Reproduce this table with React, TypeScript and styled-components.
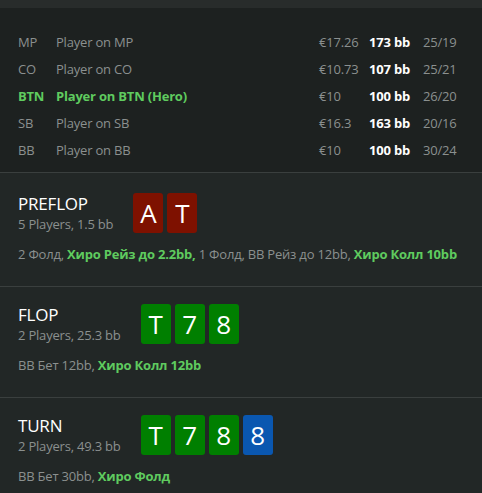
import React from "react";
import styled, {createGlobalStyle} from "styled-components";

// Hand history view

const Global = createGlobalStyle`
    html, body {
        margin: 0;
        padding: 0;
        background: #222726;
    }
    body {
        font-family: "Open Sans", "Noto Sans", sans-serif;
        font-size: 13px;
        color: #8b908f;
    }
`

const Page = styled.div`
    width: 482px;
    min-height: 485px;
    border-top: 8px solid #282c2b;
    background: #222726;
`

const Players = styled.div`
    display: grid;
    grid-template-columns: 38px 263px 50px 54px auto;
    padding: 21px 18px 8px 18px;
    background: #1d2120;
    border-bottom: 1px solid #3a3f3e;
`

const Cell = styled.div<{ $hero?: boolean, $strong?: boolean }>`
    height: 27px;
    line-height: 27px;
    white-space: nowrap;
    letter-spacing: -0.2px;
    color: ${p => p.$hero ? '#5fcb5f' : p.$strong ? '#ffffff' : '#8b908f'};
    font-weight: ${p => (p.$hero || p.$strong) ? 700 : 400};
`

const Street = styled.section`
    background: #222726;
    padding: 16px 18px 23px 18px;
    border-bottom: 1px solid #3a3f3e;
    &:first-of-type {
        padding-top: 19px;
    }
    &:last-child {
        border-bottom: none;
    }
`

const StreetHead = styled.div`
    display: flex;
    align-items: center;
    gap: 20px;
`

const Titles = styled.div`
    display: flex;
    flex-direction: column;
`

const StreetName = styled.div`
    color: #ffffff;
    font-size: 17px;
    line-height: 23px;
    letter-spacing: -0.2px;
`

const StreetInfo = styled.div`
    font-size: 13px;
    line-height: 18px;
    letter-spacing: -0.2px;
`

const Cards = styled.div`
    display: flex;
    gap: 4px;
`

const Card = styled.div<{ $color: string }>`
    width: 30px;
    height: 40px;
    border-radius: 3px;
    background: ${p => p.$color};
    color: #ffffff;
    font-size: 26px;
    line-height: 40px;
    text-align: center;
`

const Actions = styled.div`
    margin-top: 12px;
    line-height: 18px;
    letter-spacing: -0.2px;
    white-space: nowrap;
`

const Hero = styled.span`
    color: #5fcb5f;
    font-weight: 700;
`

const RED = '#7e1100'
const GREEN = '#007f00'
const BLUE = '#0a57b0'

const players = [
    {pos: 'MP', name: 'Player on MP', money: '€17.26', bb: '173 bb', ratio: '25/19'},
    {pos: 'CO', name: 'Player on CO', money: '€10.73', bb: '107 bb', ratio: '25/21'},
    {pos: 'BTN', name: 'Player on BTN (Hero)', money: '€10', bb: '100 bb', ratio: '26/20', hero: true},
    {pos: 'SB', name: 'Player on SB', money: '€16.3', bb: '163 bb', ratio: '20/16'},
    {pos: 'BB', name: 'Player on BB', money: '€10', bb: '100 bb', ratio: '30/24'},
]

const streets: {
    name: string, info: string,
    cards: [string, string][],
    actions: [string, boolean][]
}[] = [
    {
        name: 'PREFLOP', info: '5 Players, 1.5 bb',
        cards: [['A', RED], ['T', RED]],
        actions: [
            ['2 Фолд, ', false], ['Хиро Рейз до 2.2bb,', true],
            [' 1 Фолд, BB Рейз до 12bb, ', false], ['Хиро Колл 10bb', true],
        ],
    },
    {
        name: 'FLOP', info: '2 Players, 25.3 bb',
        cards: [['T', GREEN], ['7', GREEN], ['8', GREEN]],
        actions: [['BB Бет 12bb, ', false], ['Хиро Колл 12bb', true]],
    },
    {
        name: 'TURN', info: '2 Players, 49.3 bb',
        cards: [['T', GREEN], ['7', GREEN], ['8', GREEN], ['8', BLUE]],
        actions: [['BB Бет 30bb, ', false], ['Хиро Фолд', true]],
    },
]

export default function App() {
    return (
        <Page>
            <Global/>
            <Players>
                {players.map(p => (
                    <React.Fragment key={p.pos}>
                        <Cell $hero={p.hero}>{p.pos}</Cell>
                        <Cell $hero={p.hero}>{p.name}</Cell>
                        <Cell>{p.money}</Cell>
                        <Cell $strong>{p.bb}</Cell>
                        <Cell>{p.ratio}</Cell>
                    </React.Fragment>
                ))}
            </Players>
            {streets.map(s => (
                <Street key={s.name}>
                    <StreetHead>
                        <Titles>
                            <StreetName>{s.name}</StreetName>
                            <StreetInfo>{s.info}</StreetInfo>
                        </Titles>
                        <Cards>
                            {s.cards.map(([rank, color], i) => (
                                <Card key={i} $color={color}>{rank}</Card>
                            ))}
                        </Cards>
                    </StreetHead>
                    <Actions>
                        {s.actions.map(([text, hero], i) =>
                            hero ? <Hero key={i}>{text}</Hero> : <span key={i}>{text}</span>
                        )}
                    </Actions>
                </Street>
            ))}
        </Page>
    )
}
